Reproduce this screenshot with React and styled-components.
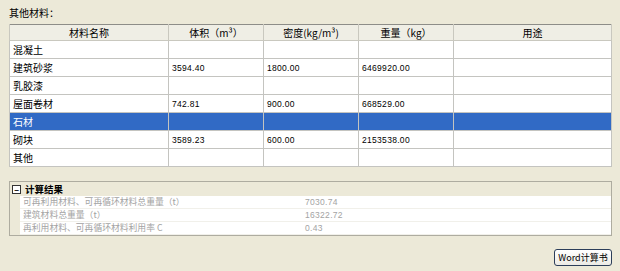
import styled, { createGlobalStyle } from "styled-components";

const Global = createGlobalStyle`
    html, body {
        margin: 0;
        padding: 0;
        background: #ece9d8;
    }
    body {
        font-family: "Noto Sans CJK SC", "Liberation Sans", sans-serif;
        font-size: 10px;
        color: #000;
    }
`

const materials = [
    { name: '混凝土', volume: '', density: '', weight: '' },
    { name: '建筑砂浆', volume: '3594.40', density: '1800.00', weight: '6469920.00' },
    { name: '乳胶漆', volume: '', density: '', weight: '' },
    { name: '屋面卷材', volume: '742.81', density: '900.00', weight: '668529.00' },
    { name: '石材', volume: '', density: '', weight: '', selected: true },
    { name: '砌块', volume: '3589.23', density: '600.00', weight: '2153538.00' },
    { name: '其他', volume: '', density: '', weight: '' },
]

const results = [
    { label: '可再利用材料、可再循环材料总重量（t）', value: '7030.74' },
    { label: '建筑材料总重量（t）', value: '16322.72' },
    { label: '再利用材料、可再循环材料利用率 C', value: '0.43' },
]

function App() {
    return (
        <Page>
            <Global />
            <Title>其他材料：</Title>
            <Table>
                <colgroup>
                    <col style={{ width: 159 }} />
                    <col style={{ width: 95 }} />
                    <col style={{ width: 95 }} />
                    <col style={{ width: 95 }} />
                    <col />
                </colgroup>
                <thead>
                    <tr>
                        <Th>材料名称</Th>
                        <Th>体积（m³）</Th>
                        <Th>密度(kg/m³)</Th>
                        <Th>重量（kg）</Th>
                        <Th>用途</Th>
                    </tr>
                </thead>
                <tbody>
                    {materials.map((m) => (
                        <Row key={m.name} $selected={m.selected}>
                            <Td>{m.name}</Td>
                            <Num>{m.volume}</Num>
                            <Num>{m.density}</Num>
                            <Num>{m.weight}</Num>
                            <Td></Td>
                        </Row>
                    ))}
                </tbody>
            </Table>

            <Results>
                <ResultsHead>
                    <Toggle>−</Toggle>
                    <HeadText>计算结果</HeadText>
                </ResultsHead>
                {results.map((r) => (
                    <ResultRow key={r.label}>
                        <ResultLabel>{r.label}</ResultLabel>
                        <ResultValue>{r.value}</ResultValue>
                    </ResultRow>
                ))}
            </Results>

            <Footer>
                <WordButton>Word计算书</WordButton>
            </Footer>
        </Page>
    )
}

export default App

const Page = styled.div`
    width: 620px;
    height: 271px;
    box-sizing: border-box;
    padding: 6px 8px 0 9px;
    display: flex;
    flex-direction: column;
`

const Title = styled.div`
    height: 14px;
    line-height: 14px;
    margin-bottom: 4px;
`

const Table = styled.table`
    width: 603px;
    border-collapse: collapse;
    table-layout: fixed;
    border: 1px solid #8d8d88;
    background: #fff;
`

const Th = styled.th`
    height: 15px;
    padding: 0;
    font-weight: normal;
    text-align: center;
    background: #efeee5;
    border: 1px solid #c9c8bf;
    border-top: none;
    line-height: 14px;
    white-space: nowrap;
    overflow: hidden;
`

const Row = styled.tr`
    background: ${(p) => (p.$selected ? '#316ac5' : '#fff')};
    color: ${(p) => (p.$selected ? '#fff' : '#000')};
`

const Td = styled.td`
    height: 17px;
    padding: 0 3px;
    border: 1px solid #c4c4c0;
    line-height: 16px;
    white-space: nowrap;
    overflow: hidden;
`

const Num = styled(Td)`
    font-family: "Liberation Sans", sans-serif;
    font-size: 8.5px;
    letter-spacing: 0.3px;
    color: inherit;
`

const Results = styled.div`
    margin-top: 14px;
    width: 603px;
    box-sizing: border-box;
    border: 1px solid #aeaca0;
    display: flex;
    flex-direction: column;
`

const ResultsHead = styled.div`
    height: 14px;
    display: flex;
    align-items: center;
    gap: 4px;
    padding-left: 2px;
    overflow: hidden;
`

const HeadText = styled.span`
    display: block;
    height: 14px;
    line-height: 14px;
    font-size: 9.5px;
    font-weight: bold;
    overflow: hidden;
`

const Toggle = styled.span`
    width: 7px;
    height: 7px;
    border: 1px solid #333;
    display: flex;
    align-items: center;
    justify-content: center;
    font-size: 8px;
    line-height: 7px;
    font-weight: bold;
    background: #fff;
`

const ResultRow = styled.div`
    display: grid;
    grid-template-columns: 283px 1fr;
    height: 12px;
    margin-left: 10px;
    background: #fff;
    border-bottom: 1px solid #f1f0ea;
    color: #a3a3a3;
    font-size: 8.8px;
    line-height: 12px;
    overflow: hidden;
`

const ResultLabel = styled.div`
    height: 12px;
    padding-left: 3px;
    white-space: nowrap;
    overflow: hidden;
`

const ResultValue = styled.div`
    height: 12px;
    padding-left: 2px;
    font-family: "Liberation Sans", sans-serif;
    font-size: 8.5px;
    letter-spacing: 0.3px;
    overflow: hidden;
`

const Footer = styled.div`
    display: flex;
    justify-content: flex-end;
    margin-top: 13px;
    padding-right: 0;
`

const WordButton = styled.button`
    width: 58px;
    height: 17px;
    padding: 0;
    border: 1px solid #2c3e5a;
    border-radius: 3px;
    background: linear-gradient(#ffffff, #ecebe5);
    font-family: "Noto Sans CJK SC", "Liberation Mono", monospace;
    font-size: 9px;
    line-height: 15px;
    color: #000;
`
